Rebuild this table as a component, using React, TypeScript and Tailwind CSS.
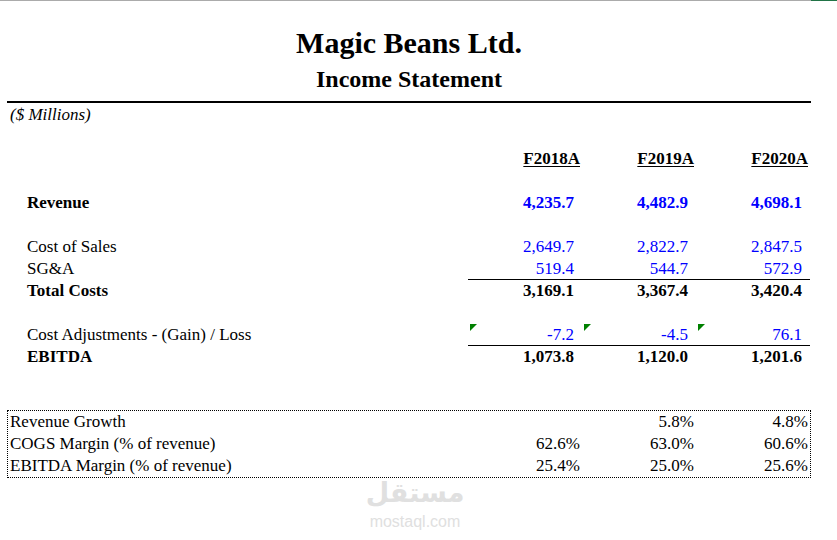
import clsx from 'clsx';

type RowProps = {
  label?: string;
  values?: string[];
  bold?: boolean;
  blue?: boolean;
  rule?: boolean;
  flags?: boolean;
};

function Flag() {
  return (
    <svg className="absolute left-[2px] top-0" width="7" height="7" viewBox="0 0 7 7">
      <polygon points="0,0 7,0 0,7" fill="#008000" />
    </svg>
  );
}

function Row({ label, values, bold, blue, rule, flags }: RowProps) {
  if (!label) return <div className="col-span-4 h-[22px]" />;
  return (
    <>
      <div className={clsx('h-[22px] leading-[22px] pl-[20px] whitespace-nowrap', bold && 'font-bold')}>{label}</div>
      {values!.map((v, i) => (
        <div
          key={i}
          className={clsx(
            'relative h-[22px] leading-[22px] pr-[8px] text-right',
            bold && 'font-bold',
            blue ? 'text-[#0000ff]' : 'text-black',
            rule && 'border-b border-black'
          )}
        >
          {flags && <Flag />}
          {v}
        </div>
      ))}
    </>
  );
}

function RatioRow({ label, values }: { label: string; values: string[] }) {
  return (
    <>
      <div className="h-[22px] leading-[22px] pl-[2px] whitespace-nowrap">{label}</div>
      {values.map((v, i) => (
        <div key={i} className="h-[22px] leading-[22px] pr-[2px] text-right">
          {v}
        </div>
      ))}
    </>
  );
}

export default function App() {
  return (
    <div className="relative w-[837px] h-[540px] bg-white text-black text-[17px] font-['Liberation_Serif',serif] overflow-hidden">
      {/* sheet edge */}
      <div className="flex h-px">
        <div className="flex-1 bg-[#ababab]" />
        <div className="w-[26px] bg-[#217346]" />
      </div>

      <div className="ml-[7px] w-[804px] pt-[25px]">
        <h1 className="h-[34px] leading-[34px] text-center text-[30px] font-bold">Magic Beans Ltd.</h1>
        <h2 className="mt-[5px] h-[28px] leading-[28px] text-center text-[24px] font-bold">Income Statement</h2>
        <div className="mt-[8px] h-[2px] bg-black" />

        <div className="mt-px h-[22px] leading-[22px] pl-[3px] italic">($ Millions)</div>
        <div className="h-[22px]" />

        <div className="grid grid-cols-[461px_114px_114px_114px]">
          <div className="h-[22px]" />
          {['F2018A', 'F2019A', 'F2020A'].map((h) => (
            <div key={h} className="h-[22px] leading-[22px] pr-[2px] text-right font-bold underline underline-offset-2">
              {h}
            </div>
          ))}
          <Row />
          <Row label="Revenue" values={['4,235.7', '4,482.9', '4,698.1']} bold blue />
          <Row />
          <Row label="Cost of Sales" values={['2,649.7', '2,822.7', '2,847.5']} blue />
          <Row label="SG&A" values={['519.4', '544.7', '572.9']} blue rule />
          <Row label="Total Costs" values={['3,169.1', '3,367.4', '3,420.4']} bold />
          <Row />
          <Row label="Cost Adjustments - (Gain) / Loss" values={['-7.2', '-4.5', '76.1']} blue rule flags />
          <Row label="EBITDA" values={['1,073.8', '1,120.0', '1,201.6']} bold />
        </div>

        <div className="mt-[42px] border border-dotted border-black">
          <div className="grid grid-cols-[460px_114px_114px_114px]">
            <RatioRow label="Revenue Growth" values={['', '5.8%', '4.8%']} />
            <RatioRow label="COGS Margin (% of revenue)" values={['62.6%', '63.0%', '60.6%']} />
            <RatioRow label="EBITDA Margin (% of revenue)" values={['25.4%', '25.0%', '25.6%']} />
          </div>
        </div>
      </div>

      {/* watermark */}
      <div className="absolute left-[366px] top-[478px] w-[98px] flex flex-col items-center text-[#e0e0e0] pointer-events-none">
        <div className="h-[34px] text-[27px] leading-[30px] font-bold font-['DejaVu_Sans',sans-serif]" dir="rtl">مستقل</div>
        <div className="mt-[2px] text-[16px] leading-[16px] font-['Liberation_Sans',sans-serif]">mostaql.com</div>
      </div>
    </div>
  );
}
